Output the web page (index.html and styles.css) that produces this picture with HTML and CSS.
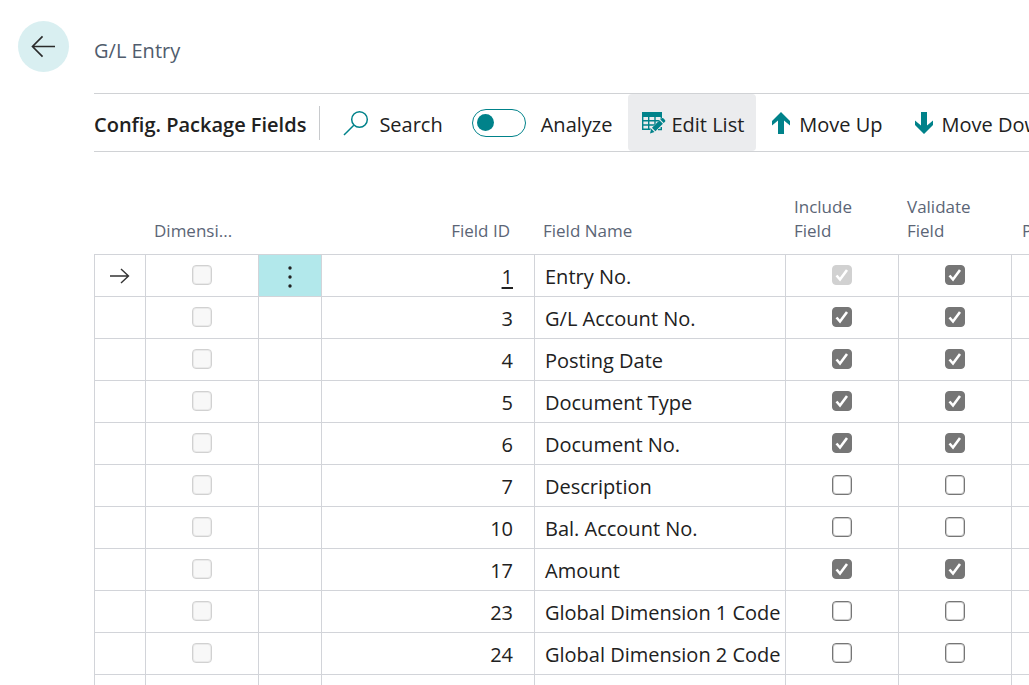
FILE: index.html
```html
<!DOCTYPE html>
<html lang="en">
<head>
<meta charset="utf-8">
<title>Config. Package Fields</title>
<link rel="stylesheet" href="styles.css">
</head>
<body>
<header class="page-header">
  <button class="back" type="button" aria-label="Back">
    <svg class="back-icon" viewBox="0 0 26 24" aria-hidden="true"><path d="M25 12H2M12 1.5 1.5 12 12 22.5"/></svg>
  </button>
  <h1 class="page-title">G/L Entry</h1>
</header>
<main class="content">
  <div class="toolbar">
    <h2 class="list-title">Config. Package Fields</h2>
    <button class="action search" type="button">
      <svg class="search-icon" viewBox="0 0 26 26" aria-hidden="true"><circle cx="16.500" cy="9.500" r="7.800"/><path d="M10.800 15.200 1 25"/></svg>
      Search
    </button>
    <label class="analyze"><input class="switch" type="checkbox" role="switch">Analyze</label>
    <button class="action pressed" type="button">
      <svg class="edit-icon" viewBox="0 0 24 22" aria-hidden="true">
        <path class="solid" d="M0 0h20v5H0z"/>
        <path class="line" d="M.7 4v13.300H10M1 8.700h18.500M1 13h13M6.700 4v13M13 4v10M19.300 4v4M19.300 15v2.500H16"/>
        <path class="halo" d="m8 21.500 1.300-5L19.500 6.500l3.500 3.500-10.200 10.200z"/>
        <path class="solid" d="m8 21.500 1.200-4.700 3.300 3.300zM10 15.800l7.500-7.500 3.400 3.400-7.500 7.500zM18.300 7.500l1.200-1.200q1-.7 1.800 0l1.700 1.700q.8 1 0 1.800L21.700 11z"/>
      </svg>
      Edit List
    </button>
    <button class="action" type="button">
      <svg class="arrow-icon" viewBox="0 0 18 22" aria-hidden="true"><path d="M9 0 18 9v4.500l-6-5V22H6V8.500l-6 5V9z"/></svg>
      Move Up
    </button>
    <button class="action" type="button">
      <svg class="arrow-icon" viewBox="0 0 18 22" aria-hidden="true"><path d="M9 22 18 13V8.500l-6 5V0H6v13.500l-6-5V13z"/></svg>
      Move Down
    </button>
  </div>
  <table class="fields">
    <colgroup><col class="c-mark"><col class="c-check"><col class="c-menu"><col class="c-id"><col class="c-name"><col class="c-check"><col class="c-check"><col></colgroup>
    <thead>
      <tr><th></th><th>Dimensi...</th><th></th><th class="num">Field ID</th><th>Field Name</th><th>Include<br>Field</th><th>Validate<br>Field</th><th class="last">Primary Key</th></tr>
    </thead>
    <tbody id="rows"></tbody>
  </table>
</main>
<script src="rows.js"></script>
</body>
</html>
```

FILE: rows.js
```js
const fields = [
  [1, "Entry No.", true, true],
  [3, "G/L Account No.", true, true],
  [4, "Posting Date", true, true],
  [5, "Document Type", true, true],
  [6, "Document No.", true, true],
  [7, "Description", false, false],
  [10, "Bal. Account No.", false, false],
  [17, "Amount", true, true],
  [23, "Global Dimension 1 Code", false, false],
  [24, "Global Dimension 2 Code", false, false],
];

const check = (label, checked, disabled) =>
  `<td class="center"><input class="tick" type="checkbox" aria-label="${label}"${checked ? " checked" : ""}${disabled ? " disabled" : ""}></td>`;

const current = '<svg class="row-arrow" viewBox="0 0 20 16" aria-hidden="true"><path d="M0 8h18M11 1l7.500 7-7.500 7"/></svg>';
const menu = '<button class="row-menu" type="button" aria-label="More options"><svg class="dots" viewBox="0 0 4 22" aria-hidden="true"><circle cx="2" cy="2" r="1.700"/><circle cx="2" cy="11" r="1.700"/><circle cx="2" cy="20" r="1.700"/></svg></button>';

document.getElementById("rows").innerHTML = fields.map(([id, name, include, validate], i) =>
  `<tr><td class="center">${i === 0 ? current : ""}</td>` +
  check(`Dimension, ${name}`, false, true) +
  `<td class="menu-cell">${i === 0 ? menu : ""}</td>` +
  `<td class="num">${i === 0 ? `<a class="id-link" href="#">${id}</a>` : id}</td><td>${name}</td>` +
  check(`Include ${name}`, include, i === 0) +
  check(`Validate ${name}`, validate, false) +
  "<td></td></tr>"
).join("") + "<tr>" + "<td></td>".repeat(8) + "</tr>";
```

FILE: styles.css
```css
* { box-sizing: border-box; }

html { overflow: hidden; }

body {
  margin: 0;
  height: 100vh;
  overflow: hidden;
  background: #fff;
  color: #212121;
  font-family: "Segoe UI", "Open Sans", "Noto Sans", sans-serif;
  font-size: 20px;
}

button {
  border: 0;
  background: none;
  color: inherit;
  font: inherit;
}

.page-header {
  display: flex;
  align-items: center;
  gap: 25px;
  height: 93px;
  padding-left: 18px;
}

.back {
  display: flex;
  align-items: center;
  justify-content: center;
  width: 51px;
  height: 51px;
  padding: 0;
  border-radius: 50%;
  background: #d9eff1;
}

.back-icon {
  width: 25px;
  height: 23px;
  fill: none;
  stroke: #2b2b2b;
  stroke-width: 1.7;
}

.page-title {
  margin: 0;
  padding-top: 8px;
  color: #505c6d;
  font-size: 20px;
  font-weight: 400;
}

.content {
  padding-left: 94px;
  overflow: hidden;
}

.toolbar {
  display: flex;
  align-items: center;
  height: 59px;
  border-top: 1px solid #d0d2d5;
  border-bottom: 1px solid #d0d2d5;
  white-space: nowrap;
}

.toolbar > * { flex: none; }

.list-title {
  margin: 0;
  padding: 4px 13px 0 0;
  border-right: 1px solid #c8cacd;
  font-size: 20px;
  font-weight: 600;
  line-height: 30px;
}

.action {
  display: flex;
  align-items: center;
  gap: 9px;
  height: 57px;
  padding: 4px 16px 0;
  border-radius: 4px;
}

.action svg {
  margin-bottom: 4px;
  fill: #00828a;
}

.search { gap: 10px; padding: 4px 29px 0 23px; }

.action .search-icon {
  width: 26px;
  height: 26px;
  fill: none;
  stroke: #00828a;
  stroke-width: 1.5;
}

.analyze {
  display: flex;
  align-items: center;
  gap: 15px;
  padding: 4px 16px 0 0;
}

.switch {
  appearance: none;
  display: flex;
  align-items: center;
  width: 54px;
  height: 28px;
  margin: 0 0 4px;
  padding-left: 4px;
  border: 1px solid #00828a;
  border-radius: 14px;
}

.switch::before {
  content: "";
  width: 17px;
  height: 17px;
  border-radius: 50%;
  background: #00828a;
}

.pressed {
  gap: 5px;
  padding: 4px 12px 0 14px;
  background: #ebecee;
}

.edit-icon { width: 24px; height: 22px; }
.edit-icon .line { fill: none; stroke: #00828a; stroke-width: 1.4; }
.edit-icon .halo { fill: #ebecee; stroke: #ebecee; stroke-width: 1; }

.arrow-icon { width: 18px; height: 22px; }

.fields {
  width: 100%;
  margin-top: 35px;
  border-spacing: 0;
  table-layout: fixed;
}

.c-mark { width: 51px; }
.c-check { width: 113px; }
.c-menu { width: 63px; }
.c-id { width: 213px; }
.c-name { width: 251px; }

th {
  height: 67px;
  padding: 0 9px 11px;
  color: #5b6576;
  font-size: 17px;
  font-weight: 400;
  line-height: 24px;
  text-align: left;
  vertical-align: bottom;
  white-space: nowrap;
}

th.last { padding: 0 0 11px 11px; }

td {
  height: 42px;
  padding: 3px 0 0 10px;
  border-top: 1px solid #d2d4d9;
  border-left: 1px solid #d2d4d9;
  line-height: 28px;
  white-space: nowrap;
}

.num { text-align: right; }
th.num { padding-right: 24px; }
td.num { padding-right: 21px; }

.center { padding: 0; text-align: center; }

.id-link { color: inherit; text-underline-offset: 3px; }

.row-arrow {
  display: block;
  width: 20px;
  height: 16px;
  margin: auto;
  fill: none;
  stroke: #333;
  stroke-width: 1.4;
}

.menu-cell { padding: 0; }

.row-menu {
  display: flex;
  align-items: center;
  justify-content: center;
  width: 100%;
  height: 41px;
  padding: 3px 0 0;
  background: #b2e8eb;
}

.dots { width: 4px; height: 22px; fill: #212121; }

.tick {
  appearance: none;
  display: block;
  width: 20px;
  height: 20px;
  margin: 0 auto 1px;
  border: 1px solid #767676;
  border-radius: 4px;
  background: #fff;
  box-shadow: inset 0 0 0 1px rgb(118 118 118 / 35%);
}

.tick:checked {
  background: #767676 url("data:image/svg+xml,%3Csvg xmlns='http://www.w3.org/2000/svg' viewBox='0 0 16 16'%3E%3Cpath d='M2.500 8.500l3.500 4L13 3' fill='none' stroke='white' stroke-width='2.600'/%3E%3C/svg%3E") center / 16px 16px no-repeat;
  box-shadow: none;
}

.tick:disabled {
  border-color: #d1d1d1;
  background-color: #f8f8f8;
  box-shadow: inset 0 0 0 1px rgb(209 209 209 / 35%);
}

.tick:disabled:checked {
  background-color: #d1d1d1;
}
```
